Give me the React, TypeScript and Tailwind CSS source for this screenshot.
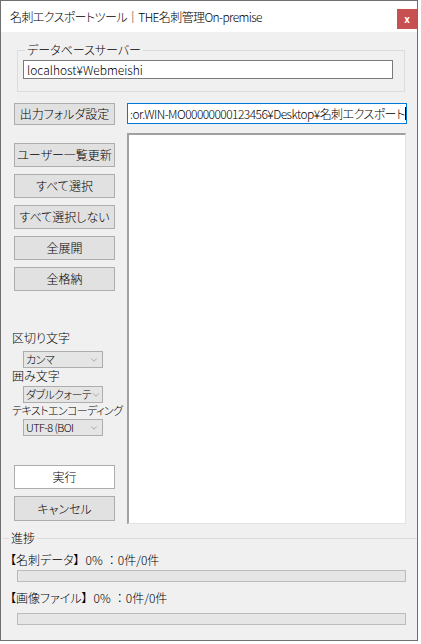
import { ChevronDown } from 'lucide-react';

const FONT = { fontFamily: '"Noto Sans CJK JP", "Noto Sans", sans-serif' };

// ─── Small pieces ────────────────────────────────────────────────────────────

function WinButton({ label, primary = false, className = '' }: { label: string; primary?: boolean; className?: string }) {
  return (
    <button
      className={`w-[101px] h-[24px] text-[12px] leading-none text-black border ${
        primary ? 'bg-white border-[#adadad]' : 'bg-[#e1e1e1] border-[#adadad]'
      } ${className}`}
    >
      {label}
    </button>
  );
}

function Combo({ value, className = '' }: { value: string; className?: string }) {
  return (
    <div className={`ml-[11px] w-[80px] h-[17px] flex items-center bg-[#e5e5e5] border border-[#adadad] pl-[2px] pr-[3px] ${className}`}>
      <span className="flex-1 whitespace-nowrap text-[11px] leading-[15px] tracking-[-0.6px]">{value}</span>
      <ChevronDown className="w-[10px] h-[10px] text-[#707070] shrink-0" strokeWidth={1.25} />
    </div>
  );
}

function Bar({ className = '' }: { className?: string }) {
  return <div className={`ml-[16px] w-[389px] h-[12px] bg-[#e6e6e6] border border-[#bcbcbc] ${className}`} />;
}

function Progress({ label, className = '' }: { label: string; className?: string }) {
  return (
    <div className={`ml-[9px] flex items-center text-[12px] leading-[16px] whitespace-nowrap ${className}`}>
      <span>{label}</span>
      <span className="ml-[6px]">0%</span>
      <span className="ml-[6px]">：</span>
      <span className="ml-[3px]">0件/0件</span>
    </div>
  );
}

// ─── App ─────────────────────────────────────────────────────────────────────

export default function App() {
  return (
    <div className="w-[421px] h-[644px] bg-white font-light [font-feature-settings:'palt']" style={FONT}>
      <div className="w-[418px] h-[641px] border border-[#6f6f6f] bg-[#f0f0f0] flex flex-col text-black">
        {/* Title bar */}
        <div className="h-[31px] bg-white flex items-start shrink-0">
          <span className="ml-[9px] mt-[8px] text-[12px] leading-[16px] tracking-[-0.6px]">名刺エクスポートツール｜THE名刺管理On-premise</span>
          <div className="ml-auto mt-[8px] w-[20px] h-[20px] bg-[#c75050] flex items-center justify-center text-white text-[10px] font-bold leading-none">
            x
          </div>
        </div>

        {/* Database server group */}
        <fieldset className="mt-[10px] ml-[16px] w-[388px] border border-[#dcdcdc] px-[5px] pb-[12px]">
          <legend className="ml-[2px] px-[2px] text-[12px] leading-[16px]">データベースサーバー</legend>
          <div className="mt-[2px] w-[370px] h-[19px] bg-white border border-[#7a7a7a] flex items-center px-[3px] text-[12px] leading-none">
            localhost¥Webmeishi
          </div>
        </fieldset>

        {/* Output folder row */}
        <div className="mt-[11px] flex items-start">
          <button className="ml-[13px] w-[101px] h-[22px] bg-[#e1e1e1] border border-[#adadad] text-[12px] leading-none">
            出力フォルダ設定
          </button>
          <div className="ml-[12px] w-[280px] h-[21px] bg-white border border-[#0078d7] flex items-center pl-[2px] whitespace-nowrap text-[12px] leading-none tracking-[-0.55px]">
            <span>:or.WIN-MO00000000123456¥Desktop¥名刺エクスポート</span>
            <span className="w-px h-[13px] bg-black shrink-0" />
          </div>
        </div>

        {/* Main row */}
        <div className="mt-[8px] flex items-start">
          <div className="ml-[11px] w-[104px] flex flex-col text-[12px]">
            <div className="pt-[10px] pl-[2px] flex flex-col gap-[7px]">
              <WinButton label="ユーザー一覧更新" />
              <WinButton label="すべて選択" />
              <WinButton label="すべて選択しない" />
              <WinButton label="全展開" />
              <WinButton label="全格納" />
            </div>

            <span className="mt-[39px] leading-[15px]">区切り文字</span>
            <Combo value="カンマ" className="mt-[6px]" />
            <span className="leading-[15px]">囲み文字</span>
            <Combo value="ダブルクォーテ" className="mt-[3px]" />
            <span className="leading-[15px] whitespace-nowrap text-[11px] tracking-[-0.6px]">テキストエンコーディング</span>
            <Combo value="UTF-8 (BOI" className="mt-[1px]" />

            <WinButton label="実行" primary className="ml-[2px] mt-[29px]" />
            <WinButton label="キャンセル" className="ml-[2px] mt-[7px] h-[25px]" />
          </div>

          {/* Tree view */}
          <div className="ml-[11px] w-[279px] h-[391px] bg-white border-t-2 border-l-2 border-t-[#a0a0a0] border-l-[#a0a0a0] border-r border-b border-r-[#e3e3e3] border-b-[#e3e3e3]" />
        </div>

        {/* Progress */}
        <div className="mt-[6px] flex items-center">
          <span className="ml-[2px] w-[6px] h-px bg-[#dcdcdc]" />
          <span className="px-[2px] text-[12px] leading-[16px]">進捗</span>
          <span className="flex-1 h-px bg-[#dcdcdc]" />
        </div>
        <Progress label="【名刺データ】" className="mt-[6px]" />
        <Bar className="mt-[2px]" />
        <Progress label="【画像ファイル】" className="mt-[8px]" />
        <Bar className="mt-[7px]" />
      </div>
    </div>
  );
}
